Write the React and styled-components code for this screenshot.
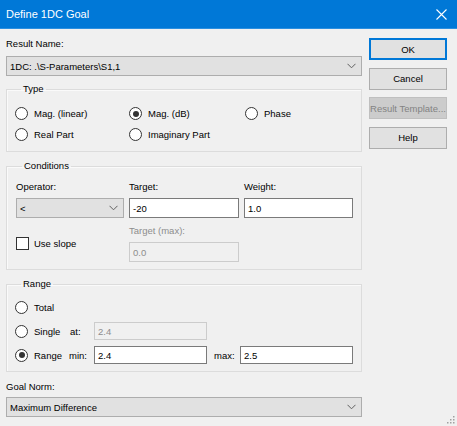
import React from 'react'
import styled, { createGlobalStyle } from 'styled-components'

const GlobalStyle = createGlobalStyle`
  html, body { margin: 0; padding: 0; background: #f0f0f0; }
  body {
    font-family: "Liberation Sans", Arial, sans-serif;
    font-size: 9.5px;
    color: #000;
  }
`

const Window = styled.div`
  position: relative;
  width: 457px;
  height: 426px;
  background: #f0f0f0;
  overflow: hidden;
`

const TitleBar = styled.div`
  height: 28px;
  background: #0078d7;
  display: flex;
  align-items: center;
  justify-content: space-between;
  padding: 0 10px 0 6px;
  color: #fff;
  font-size: 11px;
  border-bottom: 1px solid #2b8fe0;
`

const Body = styled.div`
  display: flex;
  gap: 7px;
  padding: 9px 10px 0 6px;
`

const Left = styled.div`
  width: 356px;
  display: flex;
  flex-direction: column;
`

const Right = styled.div`
  width: 78px;
  display: flex;
  flex-direction: column;
  gap: 7.6px;
`

const Label = styled.div`
  height: 12px;
  line-height: 12px;
  color: ${p => (p.disabled ? '#8d8d8d' : '#000')};
  white-space: nowrap;
`

const Combo = styled.div`
  box-sizing: border-box;
  height: 20px;
  width: ${p => p.w || '100%'};
  margin-top: ${p => p.mt || 0}px;
  background: #e1e1e1;
  border: 1px solid #adadad;
  display: flex;
  align-items: center;
  justify-content: space-between;
  padding: 0 5px 0 3px;
`

const Chevron = () => (
  <svg width="9" height="6" viewBox="0 0 9 6">
    <path d="M0.5 0.8 L4.5 4.8 L8.5 0.8" fill="none" stroke="#606060" strokeWidth="1" />
  </svg>
)

const Group = styled.fieldset`
  margin: ${p => p.mt}px 0 0 0;
  padding: ${p => p.pad};
  min-width: 0;
  border: 1px solid #dcdcdc;
  box-shadow: inset 1px 1px 0 #fafafa;
  legend {
    padding: 0 2px;
    margin-left: 6px;
    line-height: 12px;
    height: 12px;
  }
`

const TypeGrid = styled.div`
  display: grid;
  grid-template-columns: 114px 116px auto;
  grid-auto-rows: 21px;
  align-items: center;
`

const RadioWrap = styled.div`
  display: flex;
  align-items: center;
  gap: 6px;
  width: ${p => p.w || 'auto'};
  white-space: nowrap;
`

const Circle = styled.span`
  box-sizing: border-box;
  width: 13px;
  height: 13px;
  border-radius: 50%;
  border: 1px solid #333;
  background: #fff;
  display: flex;
  align-items: center;
  justify-content: center;
  flex-shrink: 0;
  &::after {
    content: '';
    width: 6px;
    height: 6px;
    border-radius: 50%;
    background: #333;
    display: ${p => (p.checked ? 'block' : 'none')};
  }
`

const Box = styled.span`
  box-sizing: border-box;
  width: 13px;
  height: 13px;
  border: 1px solid #333;
  background: #fff;
  flex-shrink: 0;
`

const Radio = ({ checked, children, w }) => (
  <RadioWrap w={w}>
    <Circle checked={checked} />
    <span>{children}</span>
  </RadioWrap>
)

const CondGrid = styled.div`
  display: grid;
  grid-template-columns: 108px 110px 109px;
  column-gap: 5px;
  grid-template-rows: 12px 25px 19px 25px;
  align-items: end;
`

const Cell = styled.div`
  grid-column: ${p => p.col};
  grid-row: ${p => p.row};
`

const Field = styled.div`
  box-sizing: border-box;
  height: ${p => p.h || 20}px;
  width: ${p => p.w || 'auto'};
  background: ${p => (p.disabled ? '#f0f0f0' : '#fff')};
  border: 1px solid ${p => (p.disabled ? '#cccccc' : '#7a7a7a')};
  color: ${p => (p.disabled ? '#8d8d8d' : '#000')};
  display: flex;
  align-items: center;
  padding: 0 3px;
`

const SlopeCell = styled.div`
  grid-column: 1;
  grid-row: 3 / span 2;
  align-self: start;
  margin-top: 19px;
  display: flex;
  align-items: center;
  gap: 5px;
`

const RangeRow = styled.div`
  height: 24px;
  display: flex;
  align-items: center;
`

const Small = styled.span`
  width: ${p => p.w}px;
  margin-left: ${p => p.ml || 0}px;
  flex-shrink: 0;
`

const Button = styled.div`
  box-sizing: border-box;
  height: 22px;
  display: flex;
  align-items: center;
  justify-content: center;
  white-space: nowrap;
  background: ${p => (p.disabled ? '#cccccc' : '#e1e1e1')};
  color: ${p => (p.disabled ? '#838383' : '#000')};
  border: 1px solid ${p => (p.primary ? '#0078d7' : p.disabled ? '#bfbfbf' : '#adadad')};
  box-shadow: ${p => (p.primary ? 'inset 0 0 0 1px #0078d7' : 'none')};
`

const Grip = styled.svg`
  position: absolute;
  right: 2px;
  bottom: 2px;
`

export default function App() {
  return (
    <Window>
      <GlobalStyle />
      <TitleBar>
        <span>Define 1DC Goal</span>
        <svg width="11" height="11" viewBox="0 0 11 11">
          <path d="M0.5 0.5 L10.5 10.5 M10.5 0.5 L0.5 10.5" stroke="#fff" strokeWidth="1.1" />
        </svg>
      </TitleBar>
      <Body>
        <Left>
          <Label>Result Name:</Label>
          <Combo mt={6}>
            <span>1DC: .\S-Parameters\S1,1</span>
            <Chevron />
          </Combo>

          <Group mt={7} pad="8px 8px 6px">
            <legend>Type</legend>
            <TypeGrid>
              <Radio>Mag. (linear)</Radio>
              <Radio checked>Mag. (dB)</Radio>
              <Radio>Phase</Radio>
              <Radio>Real Part</Radio>
              <Radio>Imaginary Part</Radio>
            </TypeGrid>
          </Group>

          <Group mt={8} pad="9px 8px 7px 9px">
            <legend>Conditions</legend>
            <CondGrid>
              <Cell col={1} row={1}><Label>Operator:</Label></Cell>
              <Cell col={2} row={1}><Label>Target:</Label></Cell>
              <Cell col={3} row={1}><Label>Weight:</Label></Cell>
              <Cell col={1} row={2}>
                <Combo>
                  <span>&lt;</span>
                  <Chevron />
                </Combo>
              </Cell>
              <Cell col={2} row={2}><Field>-20</Field></Cell>
              <Cell col={3} row={2}><Field>1.0</Field></Cell>
              <SlopeCell>
                <Box />
                <span>Use slope</span>
              </SlopeCell>
              <Cell col={2} row={3}><Label disabled>Target (max):</Label></Cell>
              <Cell col={2} row={4}><Field disabled>0.0</Field></Cell>
            </CondGrid>
          </Group>

          <Group mt={8} pad="5px 8px 4px">
            <legend>Range</legend>
            <RangeRow>
              <Radio>Total</Radio>
            </RangeRow>
            <RangeRow>
              <Radio w="55px">Single</Radio>
              <Small w={24}>at:</Small>
              <Field disabled h={18} w="113px">2.4</Field>
            </RangeRow>
            <RangeRow>
              <Radio checked w="54px">Range</Radio>
              <Small w={25}>min:</Small>
              <Field h={18} w="113px">2.4</Field>
              <Small w={26} ml={7}>max:</Small>
              <Field h={18} w="113px">2.5</Field>
            </RangeRow>
          </Group>

          <Label style={{ marginTop: 9 }}>Goal Norm:</Label>
          <Combo mt={4}>
            <span>Maximum Difference</span>
            <Chevron />
          </Combo>
        </Left>
        <Right>
          <Button primary>OK</Button>
          <Button>Cancel</Button>
          <Button disabled>Result Template...</Button>
          <Button>Help</Button>
        </Right>
      </Body>
      <Grip width="8" height="8" viewBox="0 0 8 8">
        <g fill="#a0a0a0">
          <rect x="6" y="0" width="1.5" height="1.5" />
          <rect x="3" y="3" width="1.5" height="1.5" />
          <rect x="6" y="3" width="1.5" height="1.5" />
          <rect x="0" y="6" width="1.5" height="1.5" />
          <rect x="3" y="6" width="1.5" height="1.5" />
          <rect x="6" y="6" width="1.5" height="1.5" />
        </g>
      </Grip>
    </Window>
  )
}
